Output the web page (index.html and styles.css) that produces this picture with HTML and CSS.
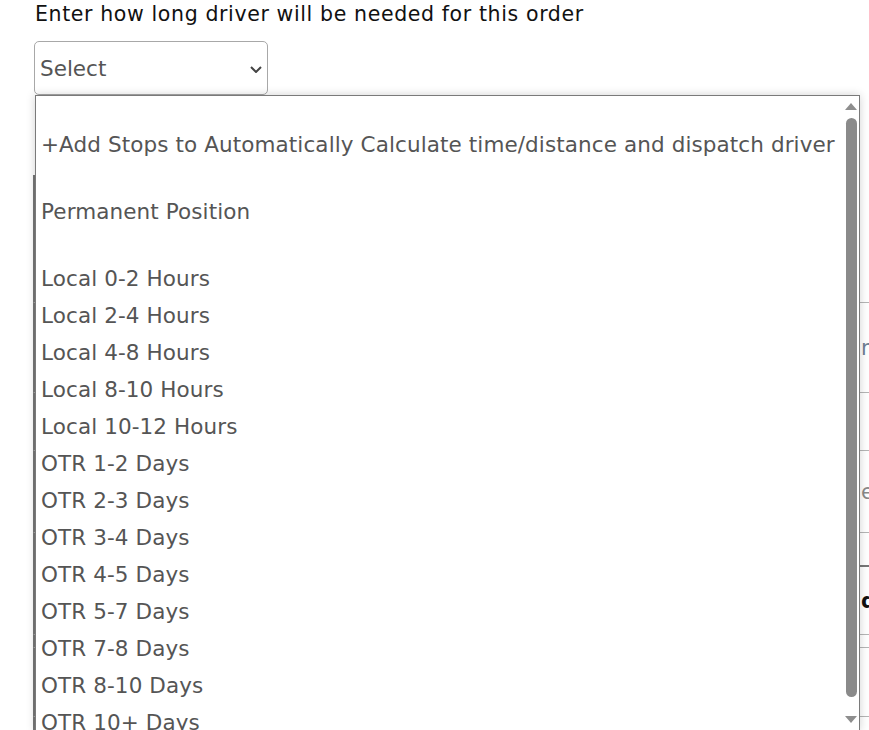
FILE: index.html
```html
<!DOCTYPE html>
<html>
<head>
<meta charset="utf-8">
<link rel="stylesheet" href="styles.css">
</head>
<body>
<div class="page">
  <div class="label">Enter how long driver will be needed for this order</div>
  <div class="select-wrap">
    <div class="select">
      <span class="select-text">Select</span>
      <svg class="chev" width="12" height="7" viewBox="0 0 12 7"><path d="M1 1 L6 6 L11 1" fill="none" stroke="#444" stroke-width="2"/></svg>
    </div>
    <div class="dropdown">
      <ul class="options">
        <li class="spaced">+Add Stops to Automatically Calculate time/distance and dispatch driver</li>
        <li class="spaced">Permanent Position</li>
        <li>Local 0-2 Hours</li>
        <li>Local 2-4 Hours</li>
        <li>Local 4-8 Hours</li>
        <li>Local 8-10 Hours</li>
        <li>Local 10-12 Hours</li>
        <li>OTR 1-2 Days</li>
        <li>OTR 2-3 Days</li>
        <li>OTR 3-4 Days</li>
        <li>OTR 4-5 Days</li>
        <li>OTR 5-7 Days</li>
        <li>OTR 7-8 Days</li>
        <li>OTR 8-10 Days</li>
        <li>OTR 10+ Days</li>
      </ul>
      <div class="scrollbar">
        <span class="arrow up"></span>
        <span class="thumb"></span>
        <span class="arrow down"></span>
      </div>
    </div>
  </div>
  <div class="under">
    <div class="row r1"></div>
    <div class="row r2"><span class="ph blue">n</span></div>
    <div class="row r3"></div>
    <div class="row r4"><span class="ph">e</span></div>
    <div class="row r5"></div>
    <div class="row r6"><span class="ph bold">d,</span></div>
    <div class="row r7"></div>
    <div class="row r8"></div>
    <div class="row r9"></div>
  </div>
</div>
</body>
</html>
```
FILE: styles.css
```css
html, body {
  margin: 0;
  padding: 0;
  background: #fff;
  overflow: hidden;
  height: 730px;
}
.page {
  font-family: "DejaVu Sans", sans-serif;
}
.label {
  margin-left: 35px;
  padding-top: 2px;
  font-size: 20.5px;
  letter-spacing: 0.62px;
  line-height: 24px;
  color: #111;
  white-space: nowrap;
}
.select-wrap {
  position: relative;
  margin-top: 15px;
  margin-left: 34px;
  width: 234px;
}
.select {
  box-sizing: border-box;
  width: 234px;
  height: 54px;
  border: 1px solid #a8a8a8;
  border-radius: 5px;
  background: #fff;
  display: flex;
  align-items: center;
  justify-content: space-between;
  padding: 0 5px 0 5px;
}
.select-text {
  font-size: 21.5px;
  color: #555;
}
.chev {
  display: block;
  margin-top: 2px;
}
.dropdown {
  position: absolute;
  left: 1px;
  top: 54px;
  width: 823px;
  height: 634px;
  border: 1px solid #7a7a7a;
  background: #fff;
  box-shadow: 0 0 9px rgba(0, 0, 0, 0.18);
  display: flex;
  z-index: 2;
}
.options {
  flex: 1;
  margin: 0;
  padding: 30px 0 0 5px;
  list-style: none;
  overflow: hidden;
  font-size: 21.5px;
  letter-spacing: 0.1px;
  color: #555;
}
.options li {
  line-height: 37px;
  height: 37px;
  white-space: nowrap;
}
.options li.spaced {
  margin-bottom: 30px;
}
.scrollbar {
  width: 16px;
  display: flex;
  flex-direction: column;
  align-items: center;
  padding-top: 7px;
  padding-bottom: 7px;
  box-sizing: border-box;
}
.arrow {
  width: 0;
  height: 0;
  border-left: 6px solid transparent;
  border-right: 6px solid transparent;
}
.arrow.up {
  border-bottom: 7px solid #8e8e8e;
}
.arrow.down {
  border-top: 7px solid #8e8e8e;
  margin-top: auto;
}
.thumb {
  width: 11px;
  height: 579px;
  margin-top: 8px;
  border-radius: 6px;
  background: #8a8a8a;
}
.under {
  margin-top: 80px;
  margin-left: 33px;
  width: 900px;
}
.row {
  box-sizing: border-box;
  border-left: 2px solid #777;
  border-bottom: 1px solid #b5b5b5;
  display: flex;
  align-items: center;
  padding-left: 826px;
  font-size: 21px;
}
.r1 { height: 128px; }
.r2 { height: 90px; }
.r3 { height: 58px; }
.r4 { height: 82px; }
.r5 { height: 34px; border-bottom: 2px solid #777; }
.r6 { height: 68px; }
.r7 { height: 13px; }
.r8 { height: 69px; }
.r9 { height: 40px; border-bottom: none; }
.ph {
  color: #8a8a8a;
}
.ph.blue {
  color: #6f7f95;
}
.ph.bold {
  color: #111;
  font-weight: bold;
}
```
